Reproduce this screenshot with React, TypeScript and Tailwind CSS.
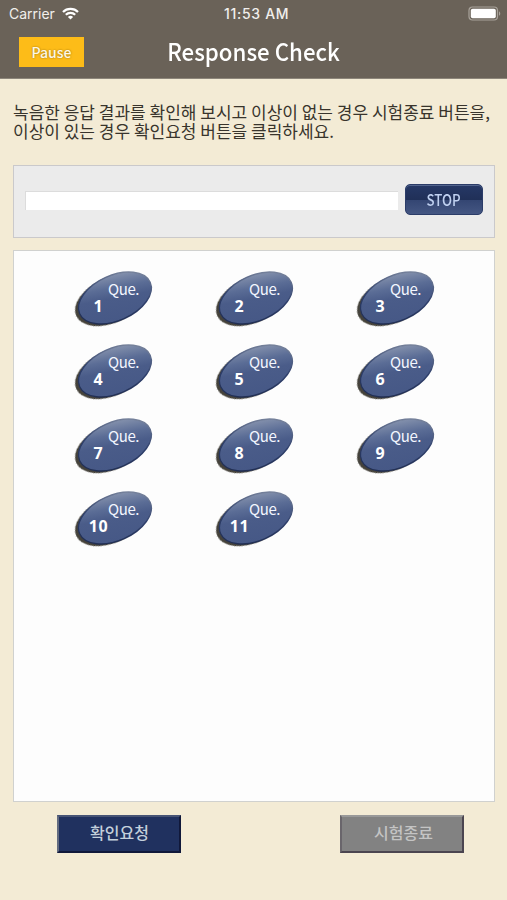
const questions = [1, 2, 3, 4, 5, 6, 7, 8, 9, 10, 11]

function StatusBar(){
  return(
  <div className="relative flex h-[27px] items-center justify-between pl-[9px] pr-[6px] text-[#f1efec]">
    <div className="flex items-center gap-[7px]">
      <span className="font-['Inter',sans-serif] text-[14px] leading-[27px]">Carrier</span>
      <svg width="17" height="13" viewBox="0 0 17 13" fill="none" stroke="#fff" strokeWidth="2.2">
        <path d="M1 4.9C5 .8 12 .8 16 4.9"/>
        <path d="M3.8 7.8C6.4 5.2 10.6 5.2 13.2 7.8"/>
        <path d="M8.5 12.6L5.9 9.9C7.3 8.5 9.7 8.5 11.1 9.9Z" fill="#fff" stroke="none"/>
      </svg>
    </div>
    <span className="absolute left-[224px] whitespace-nowrap font-['Inter',sans-serif] text-[14px] font-medium leading-[28px] tracking-[0.7px]">11:53 AM</span>
    <svg width="33" height="16" viewBox="0 0 33 16">
      <rect x="1" y="1" width="28.5" height="13" rx="3.5" fill="none" stroke="#a8a29a" strokeWidth="1.2"/>
      <rect x="2.8" y="2.8" width="25" height="9.4" rx="1.8" fill="#fff"/>
      <path d="M31 5.2c1.7.8 1.7 3.8 0 4.6z" fill="#a8a29a"/>
    </svg>
  </div>)
}

function QuestionButton({ num }: { num: number }){
  return(
  <button className="relative h-[57px] w-[81px]">
    <svg className="block overflow-visible" width="81" height="57" viewBox="0 0 81 57">
      <defs>
        <linearGradient id={`fill-${num}`} x1="0" y1="0" x2="0" y2="1" gradientTransform="rotate(22 .5 .5)">
          <stop offset="0" stopColor="#8390ac"/>
          <stop offset="0.28" stopColor="#5b6d96"/>
          <stop offset="0.5" stopColor="#4a5c89"/>
          <stop offset="1" stopColor="#465886"/>
        </linearGradient>
        <linearGradient id={`edge-${num}`} x1="0" y1="1" x2="1" y2="0">
          <stop offset="0" stopColor="#1b2749"/>
          <stop offset="0.5" stopColor="#2f406c"/>
          <stop offset="1" stopColor="#929cae"/>
        </linearGradient>
        <filter id={`soft-${num}`} x="-20%" y="-20%" width="140%" height="140%">
          <feGaussianBlur stdDeviation="0.7"/>
        </filter>
      </defs>
      <ellipse cx="38.4" cy="29.2" rx="38.5" ry="22.6" transform="rotate(-24 38.4 29.2)" fill="#45423b" filter={`url(#soft-${num})`}/>
      <ellipse cx="41.9" cy="27" rx="38.6" ry="22.6" transform="rotate(-24 41.9 27)" fill={`url(#fill-${num})`} stroke={`url(#edge-${num})`} strokeWidth="1.4"/>
    </svg>
    <span className="absolute left-[35px] top-[8px] font-['Noto_Sans_CJK_KR',sans-serif] text-[15px] leading-[20px] tracking-[-0.4px] text-[#f3f6ff]">Que.</span>
    <span className="absolute left-[4px] top-[25px] w-[43px] text-center font-['Noto_Sans',sans-serif] text-[16px] font-bold leading-[20px] tracking-[0.6px] text-white">{num}</span>
  </button>)
}

export default function App(){
  return(
  <div className="flex h-[900px] w-[507px] flex-col overflow-hidden bg-[#f3ebd5] font-['Noto_Sans_CJK_KR',sans-serif]">
    <header className="h-[79px] shrink-0 border-b border-[#8d867a] bg-[#6a6258]">
      <StatusBar/>
      <div className="grid h-[50px] grid-cols-[149px_1fr_149px] items-center">
        <button className="ml-[19px] h-[30px] w-[65px] bg-[#fdbc18] text-[14px] font-medium leading-[30px] text-[#fff8e4] [text-shadow:0_0_2px_#8f6b12]">Pause</button>
        <h1 className="scale-x-[.927] whitespace-nowrap pb-[2px] text-center text-[24px] font-medium leading-[48px] text-white">Response Check</h1>
      </div>
    </header>

    <div className="ml-[13px] mt-[23px] h-[63px] shrink-0 whitespace-nowrap text-[17px] leading-[19px] text-[#38342c]">
      <p>녹음한 응답 결과를 확인해 보시고 이상이 없는 경우 시험종료 버튼을,</p>
      <p>이상이 있는 경우 확인요청 버튼을 클릭하세요.</p>
    </div>

    <section className="mx-[13px] flex h-[73px] w-[482px] shrink-0 items-center justify-between border border-[#cac9cb] bg-[#ebebeb] pl-[11px] pr-[11px]">
      <div className="mb-[2px] h-[19px] w-[373px] border-l border-t border-[#dcdcdc] bg-white"></div>
      <button className="mb-[4px] h-[31px] w-[78px] rounded-[5px] border border-[#2b3c68] bg-[linear-gradient(#263866_0%,#203058_50%,#344673_53%,#445682_100%)] text-[#bfd0f0] shadow-[inset_0_1px_0_#52648d]">
        <span className="inline-block scale-x-[.83] text-[16px] font-medium leading-[29px]">STOP</span>
      </button>
    </section>

    <main className="mx-[13px] mt-[12px] h-[552px] w-[482px] shrink-0 border border-[#d0d1cf] bg-[#fdfdfd] pl-[59px] pt-[20px]">
      <div className="grid grid-cols-[81px_81px_81px] gap-x-[60px] gap-y-[16.3px]">
        {questions.map((num)=>(<QuestionButton key={num} num={num}/>))}
      </div>
    </main>

    <footer className="flex justify-between pl-[57px] pr-[43px] pt-[13px] text-[16px] font-medium">
      <button className="h-[38px] w-[124px] border-2 border-b-[#10183a] border-l-[#626b80] border-r-[#10183a] border-t-[#475475] bg-[#20315f] pb-[4px] leading-[30px] text-[#c4d0dc]"><span className="pl-[1px]">확인요청</span></button>
      <button className="h-[38px] w-[124px] border-2 border-b-[#4b4550] border-l-[#69656b] border-r-[#4b4550] border-t-[#999] bg-[#828282] pb-[4px] leading-[30px] text-[#c4c4c4]"><span className="pl-[3px]">시험종료</span></button>
    </footer>
  </div>)
}
